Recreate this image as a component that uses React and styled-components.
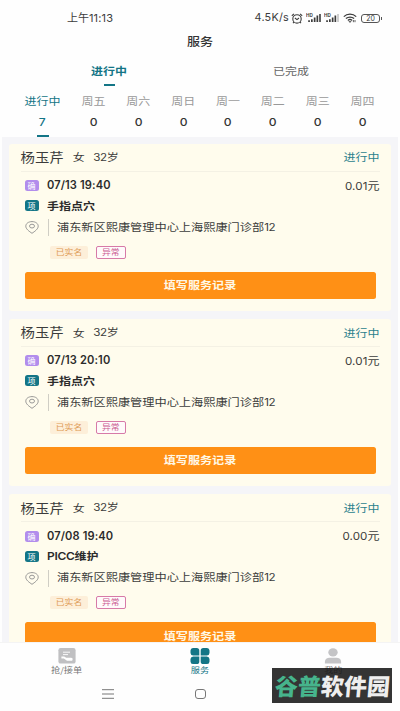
import styled, { createGlobalStyle } from "styled-components";

const days = [
  { label: "进行中", count: 7, active: true },
  { label: "周五", count: 0 },
  { label: "周六", count: 0 },
  { label: "周日", count: 0 },
  { label: "周一", count: 0 },
  { label: "周二", count: 0 },
  { label: "周三", count: 0 },
  { label: "周四", count: 0 },
];

const orders = [
  { id: 1, time: "07/13 19:40", item: "手指点穴", price: "0.01" },
  { id: 2, time: "07/13 20:10", item: "手指点穴", price: "0.01" },
  { id: 3, time: "07/08 19:40", latin: "PICC", item: "维护", price: "0.00" },
];

const Signal = ({ faded }) => (
  <SignalUI viewBox="0 0 16 10">
    <text x="0" y="3.9" fontSize="4.6" fontWeight="700">
      HD
    </text>
    <path d="M2.2 7.2h1.7v1.8H2.2zM5 6.2h1.7V9H5zM7.8 4.4h1.7V9H7.8zM10.5 2.6h1.7V9h-1.7z" />
    <path d="M13.2 1h1.6v8h-1.6z" opacity={faded ? 0.3 : 1} />
  </SignalUI>
);

const StatusBar = () => (
  <StatusBarUI>
    <ClockUI>
      上午<span>11:13</span>
    </ClockUI>
    <StatusRightUI>
      <SpeedUI>4.5K/s</SpeedUI>
      <AlarmUI viewBox="0 0 12 11">
        <circle cx="6" cy="5.9" r="4.2" />
        <path d="M.8 2.7 3 .9M11.2 2.7 9 .9M3.9 5l2.1 1.6L8 5M2.9 9.2l-.9 1M9.1 9.2l.9 1" />
      </AlarmUI>
      <Signal />
      <Signal faded />
      <WifiUI viewBox="0 0 14 10">
        <path d="M.8 3.6C4.2.4 9.8.4 13.2 3.6M2.9 5.6c2.3-2.1 5.9-2.1 8.2 0M4.9 7.4c1.2-1.1 3-1.1 4.2 0" />
        <path d="M6 8.3h2L7 9.5zM10.4 7v2.2M12 9.2V7" strokeWidth=".8" />
      </WifiUI>
      <BatteryUI>20</BatteryUI>
    </StatusRightUI>
  </StatusBarUI>
);

const OrderCard = ({ order }) => (
  <CardUI>
    <CardHeadUI>
      <NameUI>杨玉芹</NameUI>
      <PersonInfoUI>女</PersonInfoUI>
      <PersonInfoUI>
        <DigitsUI>32</DigitsUI>岁
      </PersonInfoUI>
      <StateUI>进行中</StateUI>
    </CardHeadUI>
    <RowUI $height={20}>
      <BadgeUI $color="#b28dec">确</BadgeUI>
      <TimeUI>{order.time}</TimeUI>
      <PriceUI>
        <DigitsUI $wide>{order.price}</DigitsUI>元
      </PriceUI>
    </RowUI>
    <RowUI $height={20}>
      <BadgeUI $color="#137586">项</BadgeUI>
      <ItemUI>
        {order.latin && <span>{order.latin}</span>}
        {order.item}
      </ItemUI>
    </RowUI>
    <RowUI $height={24}>
      <PinUI viewBox="0 0 14 13">
        <path d="M7 12.3C4.2 10.4.8 8 .8 5.2.8 2.5 3.5.6 7 .6s6.2 1.9 6.2 4.6c0 2.8-3.4 5.2-6.2 7.1z" />
        <ellipse cx="7" cy="5.1" rx="2.5" ry="1.9" />
      </PinUI>
      <AddressUI>
        <span>
          浦东新区熙康管理中心上海熙康门诊部<DigitsUI>12</DigitsUI>
        </span>
      </AddressUI>
    </RowUI>
    <TagsUI>
      <RealNameTagUI>
        <span>已实名</span>
      </RealNameTagUI>
      <AbnormalTagUI>
        <span>异常</span>
      </AbnormalTagUI>
    </TagsUI>
    <RecordButtonUI>
      <span>填写服务记录</span>
    </RecordButtonUI>
  </CardUI>
);

export default function App() {
  return (
    <ScreenUI>
      <GlobalStyle />
      <StatusBar />
      <TitleUI>服务</TitleUI>
      <TabsUI>
        <TabUI $active>
          <span>进行中</span>
        </TabUI>
        <TabUI>
          <span>已完成</span>
        </TabUI>
      </TabsUI>
      <DaysUI>
        {days.map((day) => (
          <DayUI key={day.label} $active={day.active}>
            <DayLabelUI>{day.label}</DayLabelUI>
            <DayCountUI>{day.count}</DayCountUI>
          </DayUI>
        ))}
      </DaysUI>
      <ListUI>
        {orders.map((order) => (
          <OrderCard key={order.id} order={order} />
        ))}
      </ListUI>
      <TabBarUI>
        <TabBarItemUI>
          <TabIconUI viewBox="0 0 20 16">
            <rect x="1.4" y="0" width="17.2" height="15.6" rx="2.2" fill="#c0c0c2" />
            <path d="M6 4.2h7M6 6.6h5" stroke="#fff" strokeWidth=".9" />
            <path d="M4.4 8.6h2.8l2 1.1h4.9c1.200 0 1.700.8 1.500 1.800l-.4 1.200H10l-3.200-2.300H4.400z" fill="#fff" />
          </TabIconUI>
          <span>抢/接单</span>
        </TabBarItemUI>
        <TabBarItemUI $active>
          <TabIconUI viewBox="0 0 20 16" fill="#137586">
            <path d="M3.3 0h3.4a2.6 2.6 0 0 1 2.6 2.6v4.8h-6A2.8 2.8 0 0 1 .5 4.9V2.6A2.7 2.7 0 0 1 3.3 0z" />
            <path d="M13.3 0h3.4a2.7 2.7 0 0 1 2.8 2.6v2.3a2.8 2.8 0 0 1-2.8 2.5h-6V2.6A2.6 2.6 0 0 1 13.3 0z" />
            <path d="M3.3 8.6h6v4.8A2.6 2.6 0 0 1 6.7 16H3.3A2.7 2.7 0 0 1 .5 13.4v-2.3a2.8 2.8 0 0 1 2.8-2.5z" />
            <path d="M10.7 8.6h6a2.8 2.8 0 0 1 2.8 2.5v2.3a2.7 2.7 0 0 1-2.8 2.6h-3.4a2.6 2.6 0 0 1-2.6-2.6z" />
          </TabIconUI>
          <span>服务</span>
        </TabBarItemUI>
        <TabBarItemUI>
          <TabIconUI viewBox="0 0 20 16" fill="#c4c4c6">
            <ellipse cx="10" cy="4.4" rx="4.7" ry="4.2" />
            <path d="M1.9 15.6v-1.8c0-2.6 2.1-4.1 4.6-4.1h7c2.5 0 4.6 1.500 4.600 4.100v1.800z" />
          </TabIconUI>
          <span>我的</span>
        </TabBarItemUI>
      </TabBarUI>
      <SystemNavUI>
        <MenuUI viewBox="0 0 12 10">
          <path d="M0 .7h12M0 5h12M0 9.3h12" />
        </MenuUI>
        <HomeUI />
      </SystemNavUI>
      <WatermarkUI>
        <span>
          <em>谷普</em>软件园
        </span>
      </WatermarkUI>
    </ScreenUI>
  );
}

const GlobalStyle = createGlobalStyle`
  * {
    box-sizing: border-box;
  }
  body {
    margin: 0;
    background: #fefefe;
    font-family: "Noto Sans CJK SC", sans-serif;
    line-height: 1;
    overflow: hidden;
  }
`;

const ScreenUI = styled.div`
  position: relative;
  display: flex;
  flex-direction: column;
  width: 400px;
  height: 711px;
  overflow: hidden;
  background: #fefefe;
  color: #3c3c3c;
  white-space: nowrap;
`;

const StatusBarUI = styled.div`
  display: flex;
  justify-content: space-between;
  align-items: center;
  height: 24px;
  margin-top: 6px;
  padding: 0 18px 0 67px;
`;

const ClockUI = styled.div`
  font-size: 11px;
  span {
    font-family: Inter, sans-serif;
    font-size: 11px;
    letter-spacing: 0.15px;
  }
`;

const StatusRightUI = styled.div`
  display: flex;
  align-items: center;
`;

const SpeedUI = styled.span`
  font-family: Inter, sans-serif;
  font-size: 10.8px;
  letter-spacing: 0.25px;
  margin-right: 2px;
`;

const AlarmUI = styled.svg`
  width: 12px;
  height: 11px;
  margin-right: 3px;
  fill: none;
  stroke: #3c3c3c;
  stroke-width: 1.1;
`;

const SignalUI = styled.svg`
  width: 16px;
  height: 10px;
  margin-right: 2px;
  fill: #3c3c3c;
  font-family: Inter, sans-serif;
`;

const WifiUI = styled.svg`
  width: 14px;
  height: 10px;
  margin: 0 4px 0 1px;
  fill: none;
  stroke: #3c3c3c;
  stroke-width: 1.3;
`;

const BatteryUI = styled.div`
  display: flex;
  align-items: center;
  justify-content: center;
  position: relative;
  width: 19px;
  height: 9px;
  margin-right: 2px;
  border: 1px solid #555555;
  border-radius: 3px;
  font-family: Inter, sans-serif;
  font-size: 7px;
  &::after {
    content: "";
    position: absolute;
    right: -3px;
    top: 2px;
    width: 1px;
    height: 3px;
    background: #555555;
  }
`;

const TitleUI = styled.div`
  height: 22px;
  line-height: 22px;
  text-align: center;
  font-size: 13px;
  font-weight: 500;
  color: #333333;
  transform: scaleY(0.9);
`;

const TabsUI = styled.div`
  display: flex;
  height: 35px;
  margin-top: 2px;
  padding: 7px 18px 0;
`;

const TabUI = styled.div`
  flex: 1;
  display: flex;
  flex-direction: column;
  align-items: center;
  gap: 7px;
  font-size: 12px;
  font-weight: ${({ $active }) => ($active ? 700 : 400)};
  color: ${({ $active }) => ($active ? "#137586" : "#666666")};
  span {
    line-height: 20px;
    transform: scaleY(0.88);
  }
  &::after {
    content: "";
    width: 11px;
    height: 1.5px;
    margin-top: -4px;
    background: ${({ $active }) => ($active ? "#137586" : "transparent")};
  }
`;

const DaysUI = styled.div`
  display: grid;
  grid-template-columns: 57px repeat(7, 1fr);
  height: 48px;
  padding: 0 15px 0 14px;
`;

const DayUI = styled.div`
  display: flex;
  flex-direction: column;
  align-items: center;
  color: ${({ $active }) => ($active ? "#137586" : "#999999")};
  --count: ${({ $active }) => ($active ? "#137586" : "#333333")};
  &::after {
    content: "";
    width: 12px;
    height: 1.5px;
    margin-top: auto;
    margin-bottom: 0.5px;
    background: ${({ $active }) => ($active ? "#137586" : "transparent")};
  }
`;

const DayLabelUI = styled.span`
  font-size: 12px;
  line-height: 24px;
  transform: scaleY(0.88);
`;

const DayCountUI = styled.span`
  font-family: Inter, sans-serif;
  font-size: 11px;
  font-weight: 500;
  line-height: 18px;
  color: var(--count);
  transform: scaleX(1.1);
`;

const ListUI = styled.div`
  display: flex;
  flex-direction: column;
  gap: 8px;
  height: 505px;
  margin: 0 2px;
  padding: 7px 7px 0;
  overflow: hidden;
  background: #f5f5f8;
`;

const CardUI = styled.div`
  flex-shrink: 0;
  height: 167.2px;
  padding: 0 15.5px;
  border-radius: 3px;
  background: #fffced;
`;

const CardHeadUI = styled.div`
  display: flex;
  align-items: center;
  height: 27.7px;
  margin: 0 -4px 4px;
  border-bottom: 1px solid #f4f1e4;
`;

const NameUI = styled.span`
  margin-right: 9px;
  font-size: 14.4px;
  transform: scaleY(0.88);
`;

const PersonInfoUI = styled.span`
  margin-right: 8.5px;
  font-size: 12px;
  line-height: 16px;
  transform: scaleY(0.88);
`;

const DigitsUI = styled.span`
  font-family: Inter, sans-serif;
  font-size: 11.6px;
  letter-spacing: ${({ $wide }) => ($wide ? "0.1px" : "-0.3px")};
`;

const StateUI = styled.span`
  margin-left: auto;
  font-size: 12px;
  color: #2b7f8c;
  transform: scaleY(0.88);
`;

const RowUI = styled.div`
  display: flex;
  align-items: center;
  height: ${({ $height }) => $height}px;
`;

const BadgeUI = styled.span`
  width: 14px;
  height: 11px;
  margin-right: 8.5px;
  border-radius: 2.5px;
  background: ${({ $color }) => $color};
  color: #ffffff;
  font-size: 8px;
  line-height: 11px;
  text-align: center;
`;

const TimeUI = styled.span`
  font-family: Inter, sans-serif;
  font-size: 11.1px;
  font-weight: 600;
  letter-spacing: 0.12px;
  color: #2b2b2b;
`;

const PriceUI = styled.span`
  margin-left: auto;
  margin-right: -4px;
  font-size: 12px;
  transform: scaleY(0.92);
`;

const ItemUI = styled.span`
  font-size: 12px;
  font-weight: 700;
  color: #2b2b2b;
  transform: scaleY(0.88);
  span {
    font-family: Inter, sans-serif;
    font-size: 12px;
    font-weight: 600;
    letter-spacing: -0.3px;
  }
`;

const PinUI = styled.svg`
  width: 14px;
  height: 13px;
  margin-left: 0.5px;
  margin-right: 9px;
  fill: none;
  stroke: #8d8d8d;
  stroke-width: 0.9;
`;

const AddressUI = styled.span`
  display: flex;
  align-items: center;
  height: 17px;
  padding-left: 8px;
  border-left: 1px solid #d0cec5;
  font-size: 12.2px;
  > span {
    transform: scaleY(0.88);
  }
`;

const TagsUI = styled.div`
  display: flex;
  gap: 8px;
  margin: 6px 0 13px 25.5px;
`;

const TagUI = styled.span`
  display: flex;
  align-items: center;
  justify-content: center;
  height: 13px;
  border-radius: 2px;
  font-size: 8.8px;
  span {
    transform: scaleY(0.9);
  }
`;

const RealNameTagUI = styled(TagUI)`
  width: 38px;
  background: #fdefd9;
  color: #dd9a55;
`;

const AbnormalTagUI = styled(TagUI)`
  width: 29.5px;
  border: 1px solid #d77aa8;
  background: #fffafa;
  color: #cb5c92;
`;

const RecordButtonUI = styled.button`
  display: flex;
  align-items: center;
  justify-content: center;
  width: 100%;
  height: 27px;
  padding: 0 0 1px;
  border: 0;
  border-radius: 2.5px;
  background: #ff9015;
  color: #fff8e6;
  font-family: inherit;
  font-size: 12.1px;
  font-weight: 700;
  span {
    transform: scaleY(0.88);
  }
`;

const TabBarUI = styled.div`
  display: flex;
  height: 36px;
  padding-top: 4.5px;
  border-top: 1px solid #f4f4f4;
`;

const TabBarItemUI = styled.div`
  flex: 1;
  display: flex;
  flex-direction: column;
  align-items: center;
  gap: 1px;
  font-size: 9.2px;
  color: ${({ $active }) => ($active ? "#137586" : "#777777")};
  span {
    transform: scaleY(0.88);
  }
`;

const TabIconUI = styled.svg`
  width: 20px;
  height: 16px;
`;

const SystemNavUI = styled.div`
  display: flex;
  align-items: center;
  gap: 81px;
  height: 32px;
  padding-left: 102px;
`;

const MenuUI = styled.svg`
  width: 12px;
  height: 10px;
  stroke: #777777;
  stroke-width: 1;
`;

const HomeUI = styled.div`
  width: 11px;
  height: 10px;
  border: 1px solid #777777;
  border-radius: 3px;
`;

const WatermarkUI = styled.div`
  position: absolute;
  left: 272px;
  top: 668px;
  display: flex;
  align-items: center;
  justify-content: center;
  width: 120px;
  height: 35px;
  background: rgba(24, 24, 24, 0.88);
  color: #eeeeee;
  font-size: 23px;
  font-weight: 900;
  span {
    transform: skewX(-5deg);
  }
  em {
    font-style: normal;
    color: #46b48c;
  }
`;
